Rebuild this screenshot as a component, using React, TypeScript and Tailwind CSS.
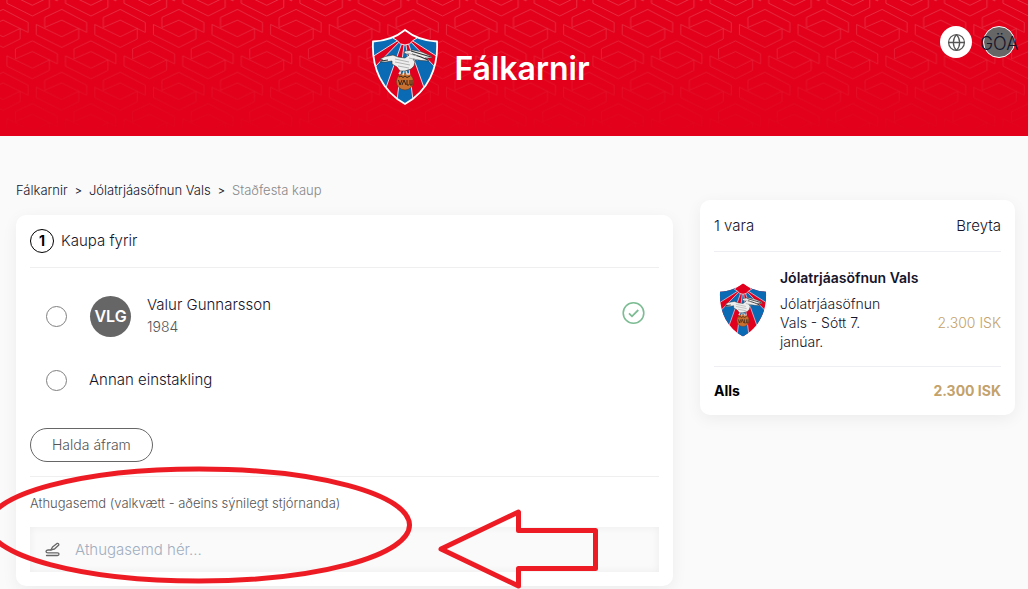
import { Globe } from "lucide-react";

const TILE_W = 58.6;
const TILE_H = 62.8;

const TILE_ANCHORS: [number, number][] = [
  [3.1, 9.4],
  [61.7, 9.4],
  [32.4, 40.8],
  [32.4, -22],
];

function HeaderPattern() {
  return (
    <svg className="absolute inset-0 h-full w-full" aria-hidden="true">
      <defs>
        <pattern id="ribbons" width={TILE_W} height={TILE_H} patternUnits="userSpaceOnUse">
          {TILE_ANCHORS.map(([x, y]) => (
            <g key={`${x}/${y}`} transform={`translate(${x} ${y})`} fill="none" stroke="#fff" strokeWidth="0.8">
              <path d="M-17 18V8L0 0L25 13V23L0 10.7Z" />
              <path d="M-25.500 15L0 27.300L17 19V29.500L0 38L-25.500 25.300Z" />
            </g>
          ))}
        </pattern>
        <linearGradient id="fade" x1="0" y1="0" x2="0" y2="1">
          <stop offset="0" stopColor="#fff" stopOpacity="0.24" />
          <stop offset="1" stopColor="#fff" stopOpacity="0" />
        </linearGradient>
        <mask id="fadeMask">
          <rect width="100%" height="100%" fill="url(#fade)" />
        </mask>
      </defs>
      <rect width="100%" height="100%" fill="url(#ribbons)" mask="url(#fadeMask)" />
    </svg>
  );
}

function Crest({ className, id, outline }: { className: string; id: string; outline: boolean }) {
  const shield = "M2 13.500C14 13 26 8.500 34 2C42 8.500 54 13 66 13.500C67.500 40 57 63 34 76C11 63 0.500 40 2 13.500Z";
  return (
    <svg className={className} viewBox="0 0 68 78" role="img" aria-label="Valur">
      <clipPath id={id}>
        <path d={shield} />
      </clipPath>
      <g clipPath={`url(#${id})`}>
        <rect width="68" height="78" fill="#e2001f" />
        <g fill="#0a6ab4" stroke="#fff" strokeWidth="0.8">
          <path d="M34 8L-2 8L-2 31Z" />
          <path d="M34 8L70 8L70 31Z" />
          <path d="M33 9L0 43L12 68Z" />
          <path d="M35 9L68 43L56 68Z" />
          <path d="M34 9L25 80H43Z" />
        </g>
        <path d="M22 10L34 0L46 10L42 12.500Q39 17 34 17Q29 17 26 12.500Z" fill="#e2001f" stroke="#fff" strokeWidth="0.9" />
      </g>
      {outline && <path d={shield} fill="none" stroke="#fff" strokeWidth="1.800" />}
      <circle cx="34" cy="53.500" r="8.500" fill="#c8702f" stroke="#6d3a1c" strokeWidth="0.6" />
      <path
        d="M28 49L30 48L32 49.500L34 48L36 49.500L39 48M27.500 52L29 57L31 52M31 57L33 52L35 57M36 52V57H38M39 52V57H41V52"
        fill="none"
        stroke="#3a2216"
        strokeWidth="1"
      />
      <path d="M30 43L28 46M35 43L36 46L39 46M33 43L32 47" stroke="#ddd" strokeWidth="1.500" fill="none" />
      <path
        d="M9 31L14 28.500L22 27L27 29L34 30L38 27L33 25L34 23L42 22L51 24L60 28L61 30L54 30L58 33L50 32.500L42 31L44 34L43 38L40 41L34 43L29 43L26 39L21 36L21 33L15 34L9 34L12 32Z"
        fill="#eee"
        stroke="#333"
        strokeWidth="0.6"
      />
      <path d="M40 23L50 26L60 29M41 26L50 29L57 32M10 33L17 32" stroke="#333" strokeWidth="1.200" fill="none" />
      <path d="M24 31L38 34M24 34L39 37M27 38L38 40M36 25L46 28M38 30L47 32" stroke="#aaa" strokeWidth="0.9" fill="none" />
    </svg>
  );
}

function CheckBadge() {
  return (
    <svg className="mb-[7px] h-6 w-6 shrink-0" viewBox="0 0 24 24" fill="none" stroke="#7cbc93" role="img" aria-label="Í lagi">
      <circle cx="12.500" cy="12" r="10.300" strokeWidth="1.600" />
      <path d="M8 12.300L11 15.300L17.300 9" strokeWidth="1.800" />
    </svg>
  );
}

function NoteIcon() {
  return (
    <svg className="h-4 w-4 shrink-0" viewBox="0 0 16 16" fill="none" stroke="#666" strokeWidth="1.300" strokeLinecap="round" strokeLinejoin="round" aria-hidden="true">
      <path d="M6 7.800L7.500 5L12 1.500Q14 1 13.800 3L9.500 7L6 7.800Z" />
      <path d="M6 8H3Q1 8.200 1 9.500Q1 10.800 3 10.800H12.500Q14 10.800 14 12Q14 13.500 12.500 13.500H1.500" />
    </svg>
  );
}

function Annotations() {
  return (
    <svg className="pointer-events-none absolute top-0 left-0" width="620" height="589" fill="none" stroke="#ed1c24" strokeWidth="5" aria-hidden="true">
      <ellipse cx="199" cy="525" rx="210.500" ry="56" />
      <path d="M441 549L518.500 512V530.500H595.500V568.500H518.500V586Z" strokeLinejoin="round" />
    </svg>
  );
}

const radioClass = "h-[21px] w-[21px] shrink-0 appearance-none rounded-full border border-[#808080] bg-white checked:border-[6px]";

export default function App() {
  return (
    <div className="relative min-h-screen overflow-hidden bg-[#fafafa] font-['Inter',sans-serif] text-[15px] font-light text-[#14142b]">
      <header className="relative flex h-[136px] items-start bg-[#e2001a]">
        <HeaderPattern />
        <div className="flex-1" />
        <div className="relative flex items-center gap-[15px] pt-7">
          <Crest className="h-[78px] w-[68px]" id="crest-header" outline />
          <h1 className="pt-1 text-[32px] leading-10 font-semibold text-white">Fálkarnir</h1>
        </div>
        <div className="relative flex flex-[1_1_67px] items-center justify-end gap-[11px] pt-[26px] pr-[13px]">
          <button type="button" aria-label="Tungumál" className="flex h-8 w-8 items-center justify-center rounded-full bg-white">
            <Globe size={19} strokeWidth={1.6} color="#555" />
          </button>
          <button type="button" className="flex h-8 w-8 items-center justify-center rounded-full border border-white bg-[#666] pt-1 text-lg">
            GÖA
          </button>
        </div>
      </header>

      <main className="grid grid-cols-[minmax(0,1fr)_315px] items-start gap-x-[27px] pr-[13px] pb-1 pl-4">
        <div className="pt-[45px]">
          <nav aria-label="Slóð" className="flex h-5 items-center gap-[7px] text-[13px]">
            <a href="#falkarnir">Fálkarnir</a>
            <span className="text-[11px] font-normal">&gt;</span>
            <a href="#sofnun">Jólatrjáasöfnun Vals</a>
            <span className="text-[11px] font-normal">&gt;</span>
            <span className="text-[#888]">Staðfesta kaup</span>
          </nav>

          <form className="mt-[14px] rounded-[10px] bg-white p-[14px] shadow-[0_4px_16px_rgba(0,0,0,0.06)]">
            <div className="flex items-center gap-[7px] border-b border-[#efefef] pb-[14px]">
              <span className="flex h-6 w-6 items-center justify-center rounded-full border border-black text-sm font-bold text-black">1</span>
              <h2>Kaupa fyrir</h2>
            </div>

            <label className="mt-7 flex h-10 items-center pr-[14px] pl-4">
              <input type="radio" name="buyer" className={radioClass} />
              <span className="ml-[23px] flex h-[41px] w-[41px] shrink-0 items-center justify-center rounded-full bg-[#666] text-base font-semibold text-white">VLG</span>
              <span className="ml-4 flex-1 leading-[22px]">
                <span className="block">Valur Gunnarsson</span>
                <span className="block text-sm leading-[22px] text-[#555]">1984</span>
              </span>
              <CheckBadge />
            </label>

            <label className="mt-8 flex h-6 items-center pl-4">
              <input type="radio" name="buyer" className={radioClass} />
              <span className="ml-[22px]">Annan einstakling</span>
            </label>

            <button type="button" className="mt-9 block h-[34px] rounded-full border border-[#666] px-[21px] text-sm text-[#555]">
              Halda áfram
            </button>

            <div className="mt-[14px] border-t border-[#efefef] pt-4">
              <label htmlFor="note" className="block text-[13px] leading-5 text-[#555]">
                Athugasemd (valkvætt - aðeins sýnilegt stjórnanda)
              </label>
              <div className="mt-[14px] flex h-[45px] items-center gap-[14px] bg-[#fafafa] pl-[15px] shadow-[inset_0_0_8px_rgba(0,0,0,0.06)]">
                <NoteIcon />
                <input id="note" type="text" placeholder="Athugasemd hér..." className="h-full min-w-0 flex-1 bg-transparent outline-none placeholder:text-[#a0aec0]" />
              </div>
            </div>
          </form>
        </div>

        <aside className="mt-16 rounded-[10px] bg-white px-[14px] shadow-[0_4px_16px_rgba(0,0,0,0.06)]">
          <div className="flex h-[52px] items-center justify-between border-b border-[#edeff3] pt-[2px]">
            <span>1 vara</span>
            <a href="#breyta">Breyta</a>
          </div>
          <div className="flex items-center border-b border-[#edeff3] pt-4 pb-[15px] pl-1">
            <Crest className="h-[56px] w-[50px] shrink-0" id="crest-item" outline={false} />
            <div className="ml-3 flex-1">
              <h3 className="text-sm leading-5 font-semibold">Jólatrjáasöfnun Vals</h3>
              <div className="mt-[6px] flex items-center justify-between">
                <p className="w-[120px] text-sm leading-[19px]">Jólatrjáasöfnun Vals - Sótt 7. janúar.</p>
                <span className="text-sm text-[#c3a26b]">2.300 ISK</span>
              </div>
            </div>
          </div>
          <div className="flex h-12 items-center justify-between text-sm font-bold">
            <span className="text-black">Alls</span>
            <span className="text-[#c3a26b]">2.300 ISK</span>
          </div>
        </aside>
      </main>
      <Annotations />
    </div>
  );
}
